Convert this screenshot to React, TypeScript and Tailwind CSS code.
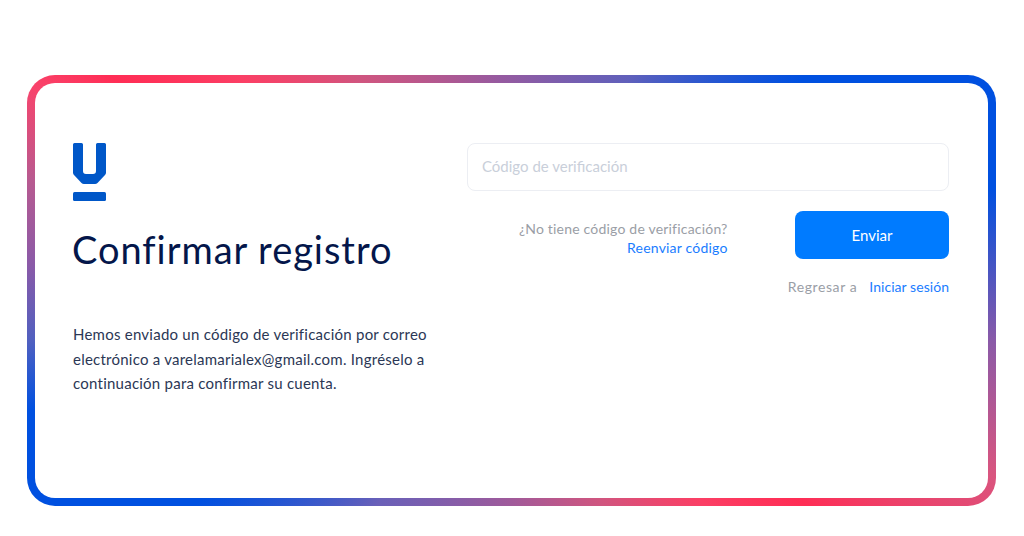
import React from 'react'

function Logo() {
    return (
        <svg width="33" height="58" viewBox="0 0 33 58" className="block">
            <path d="M1.5 0H8.5Q10 0 10 1.5V28Q10 31 13 31H20Q23 31 23 28V1.5Q23 0 24.5 0H31.5Q33 0 33 1.5V29.5Q33 31 32 32L24.5 40Q23.5 41 22 41H11Q9.5 41 8.5 40L1 32Q0 31 0 29.5V1.5Q0 0 1.5 0Z" fill="#0057c8" />
            <rect x="0" y="49" width="33" height="9" rx="1.5" fill="#0057c8" />
        </svg>
    )
}

export default function App() {
    return (
        <main className="h-[536px] w-[1024px] bg-white pt-[75px] pl-[27px] font-['Lato','Noto_Sans',sans-serif]">
            <div className="h-[431px] w-[969px] rounded-[28px] bg-[conic-gradient(#915ba2_0deg,#6060bb_29deg,#0050e0_54deg,#0050e0_78deg,#8a5aa8_96deg,#d9557f_111deg,#ff2d55_126deg,#fb3f65_138deg,#d0557f_157deg,#a05a9a_180deg,#6a60b8_212deg,#0050e0_236deg,#0050e0_256deg,#5060c0_264deg,#8a5aa8_273deg,#b85a90_283deg,#f8446c_293deg,#ff2d55_298deg,#fb3f65_308deg,#d0557f_324deg,#955aa0_357deg,#915ba2_360deg)] p-2">
                <section className="flex h-full rounded-[20px] bg-white pl-[38px] pr-[39px] pt-[60px]">
                    <div className="w-[394px] shrink-0">
                        <Logo />
                        <h1 className="-ml-px mt-[25px] text-[38px] leading-[46px] tracking-[0.95px] text-[#04164a]">
                            Confirmar registro
                        </h1>
                        <p className="mt-[50px] w-[370px] text-[15px] leading-[24.5px] tracking-[0.24px] text-[#2b3755]">
                            Hemos enviado un código de verificación por correo electrónico a varelamarialex@gmail.com. Ingréselo a continuación para confirmar su cuenta.
                        </p>
                    </div>

                    <div className="flex flex-1 flex-col">
                        <input
                            className="h-12 w-full rounded-lg border border-[#eceef3] bg-white px-[14px] pb-[2px] text-[15px] outline-none placeholder:text-[#c9cfda]"
                            placeholder="Código de verificación"
                        />
                        <div className="mt-5 flex items-start justify-between">
                            <div className="ml-[52px] flex flex-col items-end pt-[8px] text-[14px] leading-[19px] tracking-[0.2px]">
                                <span className="text-[#9a9ea6]">¿No tiene código de verificación?</span>
                                <a className="text-[#1a7dff]" href="#">Reenviar código</a>
                            </div>
                            <button className="h-12 w-[154px] rounded-lg bg-[#007bff] text-[15px] text-white">
                                Enviar
                            </button>
                        </div>
                        <div className="mt-[18px] flex justify-end gap-3 text-[14px] leading-5">
                            <span className="tracking-[0.6px] text-[#9a9ea6]">Regresar a</span>
                            <a className="tracking-[0.05px] text-[#1a7dff]" href="#">Iniciar sesión</a>
                        </div>
                    </div>
                </section>
            </div>
        </main>
    )
}
